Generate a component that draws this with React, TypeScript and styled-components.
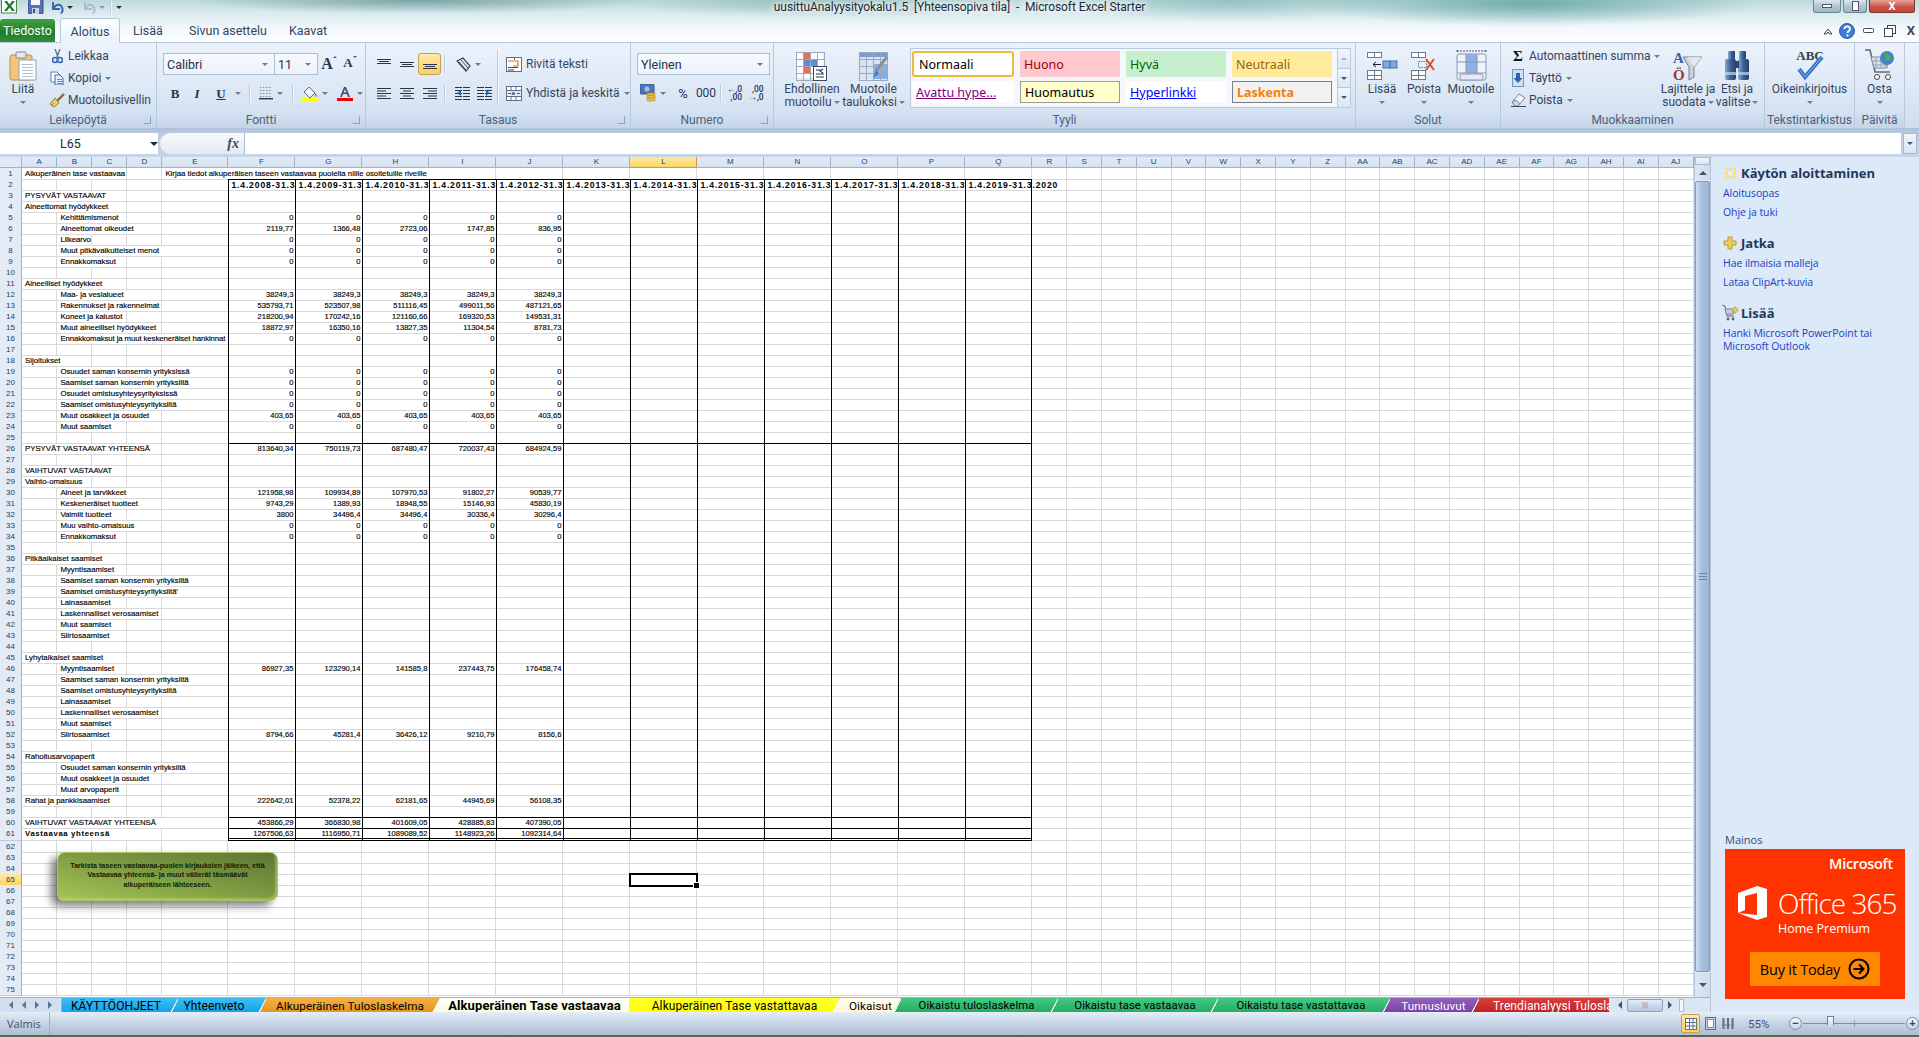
import React from 'react';
import styled, { createGlobalStyle } from 'styled-components';

const UI = '"Roboto", "Noto Sans", sans-serif';
const SEG = '"Open Sans", "Noto Sans", sans-serif';
const CELL = '"Liberation Sans", Arial, sans-serif';

const Global = createGlobalStyle`
  html, body { margin: 0; padding: 0; height: 100%; overflow: hidden; background: #dce9f9; }
  #root { height: 100%; }
  * { box-sizing: border-box; }
`;

const Win = styled.div`
  width: 1919px; height: 1037px; display: flex; flex-direction: column; overflow: hidden;
  font-family: ${UI}; font-size: 12px; color: #33465f;
`;

/* ---------- window chrome ---------- */
const Chrome = styled.div`
  height: 43px; flex: none; display: flex; flex-direction: column;
  background:
    radial-gradient(ellipse 230px 22px at 1530px 4px, rgba(98,165,160,.85), rgba(98,165,160,0)),
    radial-gradient(ellipse 170px 20px at 1230px 2px, rgba(120,180,175,.6), rgba(120,180,175,0)),
    radial-gradient(ellipse 230px 14px at 420px 0px, rgba(70,120,120,.55), rgba(70,120,120,0)),
    radial-gradient(ellipse 200px 16px at 820px 2px, rgba(110,165,160,.55), rgba(110,165,160,0)),
    linear-gradient(#bcd9dc 0, #d8e9ee 12px, #f2f8fb 28px, #fdfeff 42px);
`;
const TitleRow = styled.div`
  height: 18px; display: grid; grid-template-columns: 1fr auto 1fr; align-items: start;
`;
const Qat = styled.div`display: flex; align-items: flex-start; height: 16px;`;
const QatSlot = styled.span<{ $w: number }>`
  width: ${p => p.$w}px; height: 14px; display: flex; align-items: center; justify-content: center; flex: none;
`;
const TitleText = styled.div`
  font-family: ${UI}; font-size: 12px; letter-spacing: -.08px; color: #1c2836; white-space: pre; line-height: 14px;
  text-shadow: 0 0 6px #fff, 0 0 6px #fff, 0 0 10px #fff;
`;
const WinBtns = styled.div`display: flex; justify-content: flex-end; padding-right: 4px; gap: 2px; height: 13px;`;
const WinBtn = styled.div<{ $w: number; $close?: boolean }>`
  width: ${p => p.$w}px; height: 13px; display: flex; align-items: center; justify-content: center;
  border: 1px solid ${p => (p.$close ? '#7a3a30' : '#6d8591')}; border-top: 0;
  border-radius: 0 0 3px 3px;
  background: ${p => (p.$close ? 'linear-gradient(#e9a294, #c9564a 55%, #c24435)' : 'linear-gradient(#dbe7ec, #afc4cf 55%, #a0b6c3)')};
`;
const TabsRow = styled.div`
  flex: 1; display: flex; align-items: flex-end; border-bottom: 1px solid #b7c7da; position: relative;
`;
const FileTab = styled.div`
  width: 55px; height: 23px; background: linear-gradient(#40a040, #1f7d2c 60%, #2f9038); color: #fff;
  display: flex; align-items: center; justify-content: center; font-size: 12.5px; border-radius: 3px 3px 0 0;
`;
const MenuTab = styled.div<{ $w: number; $on?: boolean; $ml?: number }>`
  width: ${p => p.$w}px; margin-left: ${p => p.$ml || 0}px; height: ${p => (p.$on ? 25 : 23)}px; flex: none; white-space: nowrap;
  margin-bottom: ${p => (p.$on ? -1 : 0)}px;
  display: flex; align-items: center; justify-content: center; font-size: 12.5px; color: #33465f;
  ${p => p.$on ? 'background: linear-gradient(#fdfeff, #eaf1fa); border: 1px solid #b7c7da; border-bottom: 0; border-radius: 3px 3px 0 0;' : ''}
`;
const RightIcons = styled.div`
  margin-left: auto; height: 23px; display: flex; align-items: center; padding-right: 2px;
`;

/* ---------- ribbon ---------- */
const Ribbon = styled.div`
  height: 85px; flex: none; display: flex; background: linear-gradient(#ebf2fb, #dce7f5 60%, #cfddee);
`;
const Group = styled.div<{ $w: number; $noLine?: boolean }>`
  width: ${p => p.$w}px; flex: none; display: flex; flex-direction: column;
  border-right: ${p => (p.$noLine ? '0' : '1px solid #b9c9dc')};
`;
const GroupBody = styled.div<{ $pl?: number; $col?: boolean }>`
  height: 69px; flex: none; display: flex; padding-left: ${p => p.$pl || 0}px;
  ${p => p.$col ? 'flex-direction: column;' : ''}
`;
const GroupFoot = styled.div<{ $tight?: boolean }>`
  flex: 1; display: grid; grid-template-columns: ${p => (p.$tight ? '0 1fr 0' : '14px 1fr 14px')}; align-items: center;
  background: linear-gradient(rgba(190,208,230,0), rgba(190,208,230,.6));
`;
const GroupLabel = styled.div`
  grid-column: 2; text-align: center; font-size: 12px; color: #4d617c; white-space: nowrap; line-height: 15px;
`;
const Launcher = styled.div`
  grid-column: 3; width: 8px; height: 8px; border: 1px solid #8ea2ba; border-top-color: transparent; border-left-color: transparent; margin-left: 1px;
`;
const Large = styled.div<{ $w: number; $ml?: number }>`
  width: ${p => p.$w}px; margin-left: ${p => p.$ml || 0}px; flex: none; display: flex; flex-direction: column; align-items: center;
  padding-top: 5px; text-align: center;
`;
const LargeIcon = styled.div`height: 35px; flex: none; display: flex; align-items: center; justify-content: center;`;
const LargeText = styled.div`font-size: 12px; line-height: 13px; color: #33465f; white-space: nowrap; display: flex; align-items: center; gap: 2px;`;
const Caret = styled.span`
  display: inline-block; width: 0; height: 0; flex: none; border-left: 3px solid transparent; border-right: 3px solid transparent; border-top: 3px solid #6b7d94;
`;
const CaretRow = styled.div`height: 13px; display: flex; align-items: center;`;
const SmallList = styled.div<{ $ml?: number; $w?: number }>`
  display: flex; flex-direction: column; padding-top: 2px; margin-left: ${p => p.$ml || 0}px; ${p => p.$w ? `width: ${p.$w}px; flex: none;` : ''}
`;
const SmallItem = styled.div`
  height: 22px; display: flex; align-items: center; gap: 4px; color: #33465f; font-size: 12px; letter-spacing: -.05px; white-space: nowrap;
`;
const SmallIcon = styled.span`width: 14px; height: 16px; flex: none; display: flex; align-items: center; justify-content: center;`;
const ToolRow = styled.div<{ $mt?: number }>`
  height: 22px; display: flex; align-items: center; margin-top: ${p => p.$mt || 0}px; flex: none;
`;
const Combo = styled.div<{ $w: number }>`
  width: ${p => p.$w}px; height: 22px; flex: none; display: flex; align-items: center; justify-content: space-between;
  padding: 0 6px 0 3px; background: linear-gradient(#f6f9fd, #edf3fb); border: 1px solid #abbdd3; font-size: 12.5px; color: #22334a;
  & + & { margin-left: -1px; }
`;
const Tool = styled.div<{ $w: number; $ml?: number; $on?: boolean }>`
  width: ${p => p.$w}px; height: 22px; margin-left: ${p => p.$ml || 0}px; flex: none; display: flex; align-items: center; justify-content: center; gap: 4px; color: #2a3a50;
  ${p => p.$on ? 'background: linear-gradient(#ffe9a5, #fbcf63); border: 1px solid #c2a156; border-radius: 3px;' : ''}
`;
const GrowTool = styled(Tool)`gap: 0; align-items: flex-start; padding-top: 3px;`;
const Glyph = styled.span<{ $b?: boolean; $i?: boolean; $u?: boolean; $s?: number; $c?: string; $serif?: boolean }>`
  font-family: ${p => (p.$serif ? '"Liberation Serif", serif' : UI)};
  font-weight: ${p => (p.$b ? 700 : 400)}; font-style: ${p => (p.$i ? 'italic' : 'normal')};
  text-decoration: ${p => (p.$u ? 'underline' : 'none')}; font-size: ${p => p.$s || 13}px; color: ${p => p.$c || '#27374d'}; line-height: 1;
`;
const VSep = styled.div<{ $ml?: number; $h?: number; $mt?: number }>`
  width: 1px; height: ${p => p.$h || 18}px; background: #bccbdd; margin-left: ${p => p.$ml || 0}px; margin-top: ${p => p.$mt || 0}px; flex: none; box-shadow: 1px 0 0 #f3f7fc;
`;
const Column = styled.div<{ $w?: number; $ml?: number }>`
  display: flex; flex-direction: column; padding-top: 10px; margin-left: ${p => p.$ml || 0}px;
  ${p => p.$w ? `width: ${p.$w}px; flex: none;` : ''}
`;
const Gallery = styled.div`
  width: 427px; height: 60px; margin: 5px 0 0 5px; flex: none; padding: 2px 0 0 1px;
  background: #f4f8fd; border: 1px solid #b9c9dc; border-right: 0;
  display: grid; grid-template-columns: 102px 100px 100px 100px; grid-template-rows: 26px 22px; column-gap: 6px; row-gap: 4px; align-items: stretch;
`;
const Style = styled.div<{ $bg?: string; $c?: string; $bd?: string; $u?: boolean; $b?: boolean }>`
  background: ${p => p.$bg || '#fff'}; color: ${p => p.$c || '#000'};
  border: ${p => (p.$bd ? `1px solid ${p.$bd}` : '0')}; display: flex; align-items: center; padding-left: 4px;
  font-family: "Noto Sans", "Open Sans", sans-serif; font-size: 12.5px; font-weight: ${p => (p.$b ? 700 : 400)};
  text-decoration: ${p => (p.$u ? 'underline' : 'none')}; white-space: nowrap; overflow: hidden;
`;
const StyleOn = styled(Style)`border: 2px solid #f0b93c; border-radius: 3px; padding-left: 5px;`;
const GalleryScroll = styled.div`width: 14px; height: 60px; margin-top: 5px; flex: none; display: flex; flex-direction: column;`;
const GalleryBtn = styled.div`
  flex: 1; display: flex; align-items: center; justify-content: center; border: 1px solid #b9c9dc;
  background: linear-gradient(#f1f6fc, #dbe6f4); & + & { margin-top: -1px; }
`;
const Sub = styled.span`font-size: 8.5px; line-height: 8px; font-weight: 500; color: #27374d;`;
const SmallLabelBase = styled.span`font-size: 12px; color: #33465f; margin-left: 4px; white-space: nowrap;`;
const DecWrap = styled.span`display: flex; flex-direction: column; align-items: flex-end;`;
const Spacer = styled.span<{ $w: number }>`width: ${p => p.$w}px; flex: none;`;

/* ---------- formula bar ---------- */
const FormulaWrap = styled.div`
  height: 29px; flex: none; padding: 5px 2px 3px 0; display: flex; background: linear-gradient(#afc1d8, #bccde3 25%, #c6d5e8);
`;
const NameBox = styled.div`
  width: 158px; flex: none; background: #fff; display: flex; align-items: center; padding-left: 60px; font-size: 12.5px; color: #1c2836;
`;
const NameCaret = styled.span`
  margin-left: 69px; width: 0; height: 0; border-left: 4px solid transparent; border-right: 4px solid transparent; border-top: 4px solid #1c2836;
`;
const FxBox = styled.div`
  width: 85px; flex: none; display: flex; align-items: center; justify-content: flex-end; padding-right: 5px;
  background: linear-gradient(#f8fafd, #e3eaf4); border-radius: 12px 0 0 12px; border-right: 1px solid #aabbd0; margin-left: 2px;
`;
const Fx = styled.span`font-family: "Liberation Serif", serif; font-style: italic; font-weight: 700; font-size: 14px; color: #3b4a5c;`;
const FormulaInput = styled.div`flex: 1; background: #fff;`;
const FormulaDrop = styled.div`
  width: 14px; flex: none; margin-left: 2px; background: linear-gradient(#f2f6fb, #d9e4f1); border: 1px solid #a9bbd0;
  display: flex; align-items: center; justify-content: center;
`;

/* ---------- sheet ---------- */
const COLS = [35.4, 35, 35, 35, 66, ...Array(12).fill(67), ...Array(19).fill(34.8)] as number[];
const NAMES = 'A B C D E F G H I J K L M N O P Q R S T U V W X Y Z AA AB AC AD AE AF AG AH AI AJ'.split(' ');
const TEMPLATE = `22px ${COLS.map(c => c + 'px').join(' ')}`;

const Body = styled.div`flex: 1; display: flex; min-height: 0;`;
const Left = styled.div`width: 1710px; flex: none; display: flex; flex-direction: column;`;
const SheetRow = styled.div`flex: 1; display: flex; min-height: 0;`;
const Sheet = styled.div`width: 1694px; flex: none; position: relative; background: #fff; overflow: hidden;`;
const HeadRow = styled.div`display: grid; grid-template-columns: ${TEMPLATE}; height: 11px;`;
const Corner = styled.div`background: #dfe8f4; border-right: 1px solid #9eb3cb; border-bottom: 1px solid #9eb3cb;`;
const ColHead = styled.div<{ $sel?: boolean }>`
  background: ${p => (p.$sel ? 'linear-gradient(#fde9a5, #fbd565)' : 'linear-gradient(#e2ebf6, #d6e2f1)')};
  border-right: 1px solid ${p => (p.$sel ? '#d19a3b' : '#9eb3cb')}; border-bottom: 1px solid ${p => (p.$sel ? '#d19a3b' : '#9eb3cb')};
  font: 8px/10px ${CELL}; text-align: center; color: #27406a;
`;
const Row = styled.div<{ $h: number }>`display: grid; grid-template-columns: ${TEMPLATE}; height: ${p => p.$h}px;`;
const RowHead = styled.div<{ $sel?: boolean }>`
  background: ${p => (p.$sel ? 'linear-gradient(#fde9a5, #fbd565)' : '#e2ebf6')};
  border-right: 1px solid ${p => (p.$sel ? '#d19a3b' : '#9eb3cb')}; border-bottom: 1px solid ${p => (p.$sel ? '#d19a3b' : '#bccbdc')};
  font: 8px/10px ${CELL}; text-align: center; color: #27406a; padding-top: 1px;
`;
const Cell = styled.div<{
  $span?: number; $num?: boolean; $bl?: boolean; $br?: boolean; $top?: boolean; $dbl?: boolean; $noR?: boolean;
  $bold?: boolean; $over?: boolean; $sel?: boolean; $big?: boolean; $wide?: boolean; $fit?: boolean;
}>`
  grid-column: span ${p => p.$span || 1};
  min-width: 0; white-space: nowrap; color: #000; position: relative;
  font-family: ${CELL}; font-size: ${p => (p.$big ? 8.6 : p.$num ? 7.6 : 7.8)}px; line-height: 10px; font-weight: ${p => (p.$bold ? 700 : 400)};
  -webkit-text-stroke: ${p => (p.$bold ? '0' : '.14px #000')};
  letter-spacing: ${p => (p.$big ? '.85px' : p.$wide ? '.62px' : p.$fit ? '-.1px' : '0')};
  text-align: ${p => (p.$num ? 'right' : 'left')}; padding: ${p => (p.$top ? 0 : 1)}px ${p => (p.$num ? 2 : 0)}px 0 ${p => (p.$big ? 2 : 3)}px;
  overflow: ${p => (p.$over ? 'visible' : 'hidden')};
  border-right: ${p => (p.$br ? '1px solid #000' : p.$noR ? '0' : '1px solid #d9d9d9')};
  border-bottom: ${p => (p.$dbl ? '3px double #000' : '1px solid #d9d9d9')};
  ${p => (p.$bl ? 'border-left: 1px solid #000;' : '')}
  ${p => (p.$top ? 'border-top: 1px solid #000;' : '')}
  ${p => p.$sel ? `
    outline: 2px solid #000; outline-offset: -1px; z-index: 2; overflow: visible;
    &::after { content: ''; position: absolute; right: -4px; bottom: -4px; width: 5px; height: 5px; background: #000; border: 1px solid #fff; }
  ` : ''}
`;
const Note = styled.div`
  position: absolute; left: 57px; top: 695px; width: 221px; height: 49px; border-radius: 8px;
  border: 1px solid #a9c761; display: flex; align-items: center; justify-content: center; text-align: center;
  background: linear-gradient(to top right, #a6c556, #7f9c43 50%, #5c7633);
  box-shadow: -6px 5px 9px rgba(0,0,0,.5), inset -2px -2px 2px rgba(200,225,130,.45);
  font: 700 7.1px/9.6px ${CELL}; color: #101f04; padding-bottom: 1px;
`;
const VScroll = styled.div`width: 16px; flex: none; display: flex; flex-direction: column; background: #e6edf6; border-left: 1px solid #b5c5d8;`;
const Split = styled.div`height: 8px; flex: none; background: linear-gradient(#f5f8fc, #d9e4f1); border: 1px solid #a9bbd0;`;
const ScrollArrow = styled.div<{ $h: number }>`
  height: ${p => p.$h}px; flex: none; display: flex; align-items: center; justify-content: center; background: linear-gradient(90deg, #dde7f3, #cfdcec);
`;
const Thumb = styled.div`
  flex: 1; margin: 1px 0; display: flex; align-items: center; justify-content: center; border: 1px solid #7f99b9; border-radius: 2px;
  background: linear-gradient(90deg, #cfdff1, #a7c0de 45%, #9cb6d6);
`;
const Grip = styled.span`width: 8px; height: 7px; border-top: 1px solid #6a86a8; border-bottom: 1px solid #6a86a8; position: relative;
  &::after { content: ''; position: absolute; left: 0; right: 0; top: 2px; height: 1px; background: #6a86a8; }`;
const Tri = styled.span<{ $d: 'u' | 'd' | 'l' | 'r'; $s?: number; $c?: string }>`
  display: inline-block; width: 0; height: 0; flex: none;
  ${p => {
    const s = p.$s || 4; const c = p.$c || '#40566f';
    if (p.$d === 'u') return `border-left:${s}px solid transparent;border-right:${s}px solid transparent;border-bottom:${s}px solid ${c};`;
    if (p.$d === 'd') return `border-left:${s}px solid transparent;border-right:${s}px solid transparent;border-top:${s}px solid ${c};`;
    if (p.$d === 'l') return `border-top:${s}px solid transparent;border-bottom:${s}px solid transparent;border-right:${s}px solid ${c};`;
    return `border-top:${s}px solid transparent;border-bottom:${s}px solid transparent;border-left:${s}px solid ${c};`;
  }}
`;

/* tabs */
const TabBar = styled.div`
  height: 15px; flex: none; display: flex; background: #d3dfee; border-top: 1px solid #9fb3cb;
`;
const TabNav = styled.div`width: 62px; flex: none; display: flex; align-items: center; justify-content: space-around; padding: 0 4px; border-right: 1px solid #9fb3cb;`;
const TabList = styled.div`width: 1547px; flex: none; display: flex; overflow: hidden;`;
const Tab = styled.div<{ $w: number; $bg: string; $c?: string; $on?: boolean; $first?: boolean; $z: number; $fs: number; $pr: number }>`
  width: ${p => p.$w}px; margin-left: ${p => (p.$first ? 0 : -8)}px; flex: none; position: relative; z-index: ${p => p.$z};
  height: 15px; padding: 0 ${p => p.$pr}px 0 ${p => (p.$first ? 0 : 8)}px; display: flex; align-items: center; justify-content: center; overflow: hidden;
  background: ${p => p.$bg}; color: ${p => p.$c || '#000'}; white-space: nowrap;
  font-family: ${UI}; font-size: ${p => p.$fs}px; font-weight: ${p => (p.$on ? 700 : 400)}; letter-spacing: .1px;
  clip-path: ${p => (p.$first ? 'none' : 'polygon(8px 0, 100% 0, 100% 100%, 0 100%)')};
  ${p => p.$first ? '' : `&::before { content: ''; position: absolute; left: 0; top: 0; width: 8px; height: 100%;
    background: linear-gradient(to bottom right, transparent calc(50% - 1.2px), #f5f9fd calc(50% - 1.2px), #f5f9fd calc(50% + 1.2px), transparent calc(50% + 1.2px)); }`}
`;
const TabClipStart = styled.span`align-self: stretch; display: flex; align-items: center; justify-content: flex-start; width: 100%; overflow: hidden; padding-left: 14px;`;
const HScroll = styled.div`flex: 1; display: flex; align-items: center; padding-left: 9px; gap: 5px; background: #dbe6f3;`;
const HThumb = styled.div`width: 36px; height: 13px; border: 1px solid #8aa3c0; border-radius: 2px; background: linear-gradient(#e4edf7, #b3c8e0); display: flex; align-items: center; justify-content: center; color: #6a86a8; font-size: 8px; line-height: 8px;`;
const Splitter = styled.div`width: 5px; height: 13px; margin-left: 2px; border: 1px solid #a9bbd0; background: #f5f8fc;`;

/* panel */
const Panel = styled.div`
  flex: 1; background: #dce9f9; border-left: 1px solid #b5c5d8; display: flex; flex-direction: column; padding-left: 12px; font-family: ${SEG};
`;
const PanelHead = styled.div<{ $mt: number }>`
  display: flex; align-items: center; margin-top: ${p => p.$mt}px; margin-left: -2px; height: 18px;
  font-size: 13px; font-weight: 700; color: #20385c; gap: 2px; white-space: nowrap;
`;
const HeadIcon = styled.span`width: 18px; display: flex; justify-content: center; flex: none;`;
const PanelLink = styled.div<{ $mt: number }>`
  margin-top: ${p => p.$mt}px; font-size: 10.5px; line-height: 13px; color: #1a3fc4; white-space: nowrap; letter-spacing: -.08px;
`;
const AdLabel = styled.div`margin: auto 0 2px 2px; font-size: 11px; line-height: 14px; color: #3a4c6d;`;
const Ad = styled.div`
  width: 180px; height: 150px; margin: 0 0 13px 2px; background: #ff3300; color: #fff; display: flex; flex-direction: column; flex: none; font-family: ${SEG};
`;
const AdMs = styled.div`align-self: flex-end; padding: 6px 12px 0 0; font-size: 14.5px; font-weight: 600; line-height: 17px; letter-spacing: -.3px;`;
const AdMain = styled.div`display: flex; margin: 13px 0 0 13px; align-items: flex-start; gap: 10px;`;
const AdText = styled.div`display: flex; flex-direction: column;`;
const AdTitle = styled.div`font-size: 28px; font-weight: 300; line-height: 32px; letter-spacing: -1px; white-space: nowrap; margin-top: 2px;`;
const AdSub = styled.div`font-size: 12.5px; line-height: 16px; margin-top: 2px; white-space: nowrap;`;
const AdBtn = styled.div`
  width: 130px; height: 34px; margin: auto 0 13px 25px; flex: none; background: #ff8800; color: #000; display: flex; align-items: center; justify-content: center; gap: 8px;
  font-size: 14.5px; font-weight: 500; letter-spacing: -.2px;
`;

/* status */
const Status = styled.div`
  height: 23px; flex: none; display: flex; align-items: center; background: linear-gradient(#e5edf8, #c9d6e7 45%, #aebdd3);
  font-size: 11.5px; color: #3e5270;
`;
const StatusText = styled.div`width: 50px; padding-left: 7px; border-right: 1px solid #9fb0c7; height: 100%; display: flex; align-items: center; font-family: ${SEG}; font-size: 11px;`;
const ViewBtn = styled.div<{ $on?: boolean; $ml?: number }>`
  width: ${p => (p.$on ? 19 : 15)}px; height: 19px; margin-left: ${p => p.$ml || 0}px; display: flex; align-items: center; justify-content: center; flex: none;
  ${p => p.$on ? 'background: linear-gradient(#ffe9a5, #fbcf63); border: 1px solid #c2a156; border-radius: 2px;' : ''}
`;
const ZoomPct = styled.div`margin-left: 13px; width: 30px; font-size: 11.5px;`;
const ZoomRound = styled.div<{ $ml?: number }>`
  width: 13px; height: 13px; border-radius: 50%; border: 1px solid #7a8ea9; background: linear-gradient(#f5f8fc, #c7d4e5); margin-left: ${p => p.$ml || 0}px;
  flex: none; display: flex; align-items: center; justify-content: center; font: 700 11px/11px ${CELL}; color: #33465f;
`;
const ZoomTrack = styled.div`
  width: 102px; height: 1px; background: #7a8ea9; position: relative; margin: 0 1px; flex: none;
`;
const ZoomTick = styled.span`position: absolute; left: 51px; top: -3px; width: 1px; height: 7px; background: #8a9cb4;`;
const ZoomThumb = styled.span`
  position: absolute; left: 24px; top: -7px; width: 7px; height: 13px; background: linear-gradient(#f5f8fc, #c7d4e5); border: 1px solid #6d819c;
  clip-path: polygon(0 0, 100% 0, 100% 65%, 50% 100%, 0 65%);
`;
const BottomEdge = styled.div`height: 2px; flex: none; background: #55684f;`;

/* ---------- icons ---------- */
const Svg: React.FC<React.PropsWithChildren<{ w: number; h: number; vb?: string }>> = ({ w, h, vb, children }) => (
  <svg width={w} height={h} viewBox={vb || `0 0 ${w} ${h}`} style={{ display: 'block', flex: 'none' }}>{children}</svg>
);
const Bars = ({ items, w = 14, h = 12 }: { items: [number, number, number][]; w?: number; h?: number }) => (
  <Svg w={w} h={h}>{items.map(([x, y, l], i) => <rect key={i} x={x} y={y} width={l} height={1} fill="#2b3443" />)}</Svg>
);
const PasteIcon = () => (
  <Svg w={28} h={30}>
    <rect x="1" y="4" width="22" height="25" rx="2" fill="#f3c77a" stroke="#b5904f" />
    <rect x="7" y="1" width="10" height="6" rx="1" fill="#e8e8e8" stroke="#7d8794" />
    <path d="M10 9h17v20H10z" fill="#fff" stroke="#8fa0b5" />
    {[13, 16, 19, 22, 25].map(y => <rect key={y} x="13" y={y} width="11" height="1" fill="#b5c0cd" />)}
  </Svg>
);
const CutIcon = () => (
  <Svg w={11} h={15}>
    <path d="M3 0l3 8M8 0L5 8" stroke="#5a6e88" strokeWidth="1.3" fill="none" />
    <circle cx="3" cy="11" r="2.5" fill="none" stroke="#3d66ad" strokeWidth="1.6" />
    <circle cx="8" cy="11" r="2.5" fill="none" stroke="#3d66ad" strokeWidth="1.6" />
  </Svg>
);
const CopyIcon = () => (
  <Svg w={14} h={14}>
    <path d="M1 1h6l2 2v8H1z" fill="#fff" stroke="#5c7fb8" />
    <path d="M5 4h5l3 3v7H5z" fill="#eaf2fb" stroke="#3e64a3" />
    {[8, 10, 12].map(y => <rect key={y} x="7" y={y} width="5" height="1" fill="#6d8cbc" />)}
  </Svg>
);
const BrushIcon = () => (
  <Svg w={16} h={15}>
    <path d="M8 8l7-7" stroke="#8a6b2e" strokeWidth="2.4" />
    <path d="M1 11l5-6 4 5-5 4z" fill="#f0cf6b" stroke="#97792f" />
    <path d="M2 13l3-3" stroke="#97792f" />
  </Svg>
);
const BorderIcon = () => (
  <Svg w={14} h={14}>
    {[1, 4, 7, 10].map(x => [1, 4, 7, 10].map(y => <rect key={`${x}${y}`} x={x} y={y} width="1.5" height="1" fill="#7f8b99" />))}
    <rect x="0" y="12" width="14" height="1.4" fill="#2b3443" />
  </Svg>
);
const FillIcon = () => (
  <Svg w={16} h={15}>
    <path d="M7 1l6 6-5 5-6-6z" fill="#eef3f9" stroke="#5a6a7e" />
    <path d="M13 7c1.5 1.5 2 3 1 4-1-1-1-3-1-4z" fill="#3a5f9d" />
    <rect x="0" y="12" width="15" height="3" fill="#ffff00" />
  </Svg>
);
const FontColor = () => (
  <Svg w={16} h={15}>
    <path d="M3 11L7 1h2l4 10h-2l-1-3H6l-1 3zM6.6 6.5h2.8L8 3z" fill="#3a4f78" />
    <rect x="0" y="12" width="16" height="3" fill="#f40000" />
  </Svg>
);
const OrientIcon = () => (
  <Svg w={15} h={15}>
    <path d="M1 4l6-3 7 8-4 5z" fill="none" stroke="#3a4350" strokeWidth="1.2" />
    <path d="M3 5l7 8M5 3l7 8" stroke="#3a4350" />
  </Svg>
);
const IndentIcon = ({ rev }: { rev?: boolean }) => (
  <Svg w={15} h={14}>
    {[1, 4, 7, 10, 13].map(y => <rect key={y} x={0} y={y} width="15" height="1" fill="#2b3443" />)}
    <rect x="7" y="0" width="1" height="14" fill="#dce7f5" />
    <path d={rev ? 'M9 4l4 3-4 3z' : 'M6 4L2 7l4 3z'} fill="#2f62b5" />
  </Svg>
);
const WrapIcon = () => (
  <Svg w={16} h={15}>
    <rect x="0.5" y="0.5" width="15" height="14" fill="#fff" stroke="#5f6f84" />
    <path d="M2 4h10v5H7" fill="none" stroke="#d5782a" strokeWidth="1.2" />
    <rect x="2" y="10" width="10" height="1" fill="#39465a" />
    <rect x="2" y="12.5" width="6" height="1" fill="#39465a" />
    <rect x="8" y="0" width="1" height="3" fill="#5f6f84" />
  </Svg>
);
const MergeIcon = () => (
  <Svg w={16} h={15}>
    <rect x="0.5" y="0.5" width="15" height="14" fill="#fff" stroke="#5f6f84" />
    <rect x="1" y="5" width="14" height="5" fill="#e3ecf8" />
    <path d="M1 4.5h14M1 10.5h14M5 1v3M10 1v3M5 11v3M10 11v3" stroke="#5f6f84" />
    <path d="M2 7.5h3M14 7.5h-3" stroke="#2f62b5" />
    <text x="5.6" y="9.4" fontSize="6" fontFamily={CELL} fill="#000">a</text>
  </Svg>
);
const CurrencyIcon = () => (
  <Svg w={16} h={18}>
    <rect x="0" y="0" width="14" height="10" rx="1" fill="#4d76b8" stroke="#35588f" />
    <circle cx="7" cy="5" r="2.5" fill="#a8c1e4" />
    {[9, 11.5, 14].map(y => <ellipse key={y} cx="11" cy={y + 1.5} rx="4.5" ry="1.6" fill="#f0c24a" stroke="#b3852a" strokeWidth=".7" />)}
  </Svg>
);
const GridBase = ({ x, y, c, r, s = 7, color = '#9aaabc' }: { x: number; y: number; c: number; r: number; s?: number; color?: string }) => (
  <g fill="none" stroke={color}>
    {Array.from({ length: c }).map((_, i) => Array.from({ length: r }).map((_, j) => (
      <rect key={`${i}-${j}`} x={x + i * s + .5} y={y + j * s + .5} width={s} height={s} />
    )))}
  </g>
);
const CFIcon = () => (
  <Svg w={32} h={30}>
    <rect x="0" y="1" width="27" height="26" fill="#fff" />
    <rect x="7" y="1" width="7" height="7" fill="#ef6a50" />
    <rect x="7" y="8" width="14" height="7" fill="#5b8dd9" />
    <rect x="7" y="15" width="7" height="7" fill="#ef6a50" />
    <GridBase x={0} y={1} c={4} r={4} />
    <rect x="17.5" y="15.5" width="13" height="14" fill="#fff" stroke="#3c4a5e" />
    <path d="M20 19h4M27 18l-3 2 3 2M20 23h8M20 26h8" stroke="#243246" strokeWidth="1.1" fill="none" />
  </Svg>
);
const TableIcon = () => (
  <Svg w={31} h={30}>
    <rect x="1" y="1" width="28" height="5" fill="#7c9ad0" />
    <rect x="1" y="6" width="28" height="22" fill="#d8e4f6" />
    <rect x="15" y="13" width="14" height="15" fill="#8aaee3" />
    <GridBase x={1} y={1} c={4} r={4} s={7} />
    <path d="M29 6L18 20" stroke="#8a8f98" strokeWidth="3" />
    <path d="M18 19l-3 8 6-4z" fill="#4b78c7" />
  </Svg>
);
const InsertIcon = () => (
  <Svg w={31} h={28}>
    <g fill="#fff" stroke="#6b7a8f">
      <rect x="0.5" y="0.5" width="7" height="5" /><rect x="7.5" y="0.5" width="7" height="5" />
      <rect x="0.5" y="18.5" width="7" height="5" /><rect x="7.5" y="18.5" width="7" height="5" />
      <rect x="0.5" y="23.5" width="7" height="4" /><rect x="7.5" y="23.5" width="7" height="4" />
    </g>
    <rect x="16" y="9" width="7" height="7" fill="#7da7e2" stroke="#4c6fa5" />
    <rect x="23" y="9" width="7" height="7" fill="#7da7e2" stroke="#4c6fa5" />
    <path d="M14 12.5H6M9 10l-3 2.5L9 15" fill="none" stroke="#222" />
  </Svg>
);
const DeleteIcon = () => (
  <Svg w={26} h={28}>
    <g fill="#fff" stroke="#6b7a8f">
      <rect x="0.5" y="0.5" width="7" height="5" /><rect x="7.5" y="0.5" width="7" height="5" />
      <rect x="0.5" y="18.5" width="7" height="5" /><rect x="7.5" y="18.5" width="7" height="5" />
      <rect x="0.5" y="23.5" width="7" height="4" /><rect x="7.5" y="23.5" width="7" height="4" />
    </g>
    <rect x="7.5" y="9.5" width="8" height="6" fill="none" stroke="#6b7a8f" strokeDasharray="1.5 1" />
    <path d="M15 7l8 11M23 7l-8 11" stroke="#e3472b" strokeWidth="2" />
  </Svg>
);
const FormatIcon = () => (
  <Svg w={31} h={31}>
    <path d="M1 1h29M1 0v2M30 0v2" stroke="#4a5a6e" strokeDasharray="2 1" />
    <rect x="1" y="4" width="29" height="26" rx="2" fill="#eef3fa" stroke="#8a99ac" />
    <rect x="10" y="4" width="11" height="19" fill="#8db0e6" />
    <path d="M10 4v26M21 4v26M1 12h29M1 23h29" stroke="#8a99ac" fill="none" />
    <rect x="4" y="24" width="23" height="6" rx="2" fill="#e3ebf5" stroke="#8a99ac" />
  </Svg>
);
const SigmaGlyph = () => <Glyph $s={15} $b $serif $c="#111">Σ</Glyph>;
const FillDown = () => (
  <Svg w={12} h={18}>
    <rect x="0.5" y="0.5" width="11" height="17" fill="#cfdff3" stroke="#7a92b2" />
    <path d="M4 4h4v5h2.5L6 14 1.5 9H4z" fill="#2f62b5" />
  </Svg>
);
const Eraser = () => (
  <Svg w={15} h={14}>
    <path d="M1 9l7-8 6 4-7 8H4z" fill="#f4f6f9" stroke="#7a8797" />
    <path d="M1 9l3 4h3l2-2-4-4z" fill="#cfd6df" stroke="#7a8797" />
    <rect x="0" y="13" width="15" height="1" fill="#3c4a5e" />
  </Svg>
);
const SortIcon = () => (
  <Svg w={30} h={32}>
    <path d="M10 7h19l-8 10v10l-5 3V17z" fill="#cfd3d9" stroke="#7a7f87" />
    <path d="M14 7h15l-8 10z" fill="#e9ecef" opacity=".8" />
    <text x="0" y="13" fontFamily={'"Liberation Serif", serif'} fontWeight="700" fontSize="15" fill="#3a62a8">A</text>
    <text x="0" y="30" fontFamily={'"Liberation Serif", serif'} fontWeight="700" fontSize="15" fill="#963a3a">Ö</text>
  </Svg>
);
const BinoIcon = () => (
  <Svg w={28} h={31}>
    <defs>
      <linearGradient id="bn" x1="0" x2="1"><stop offset="0" stopColor="#8ba8d6" /><stop offset=".5" stopColor="#3e6099" /><stop offset="1" stopColor="#24406f" /></linearGradient>
    </defs>
    <rect x="5" y="1" width="7" height="8" rx="1" fill="url(#bn)" /><rect x="16" y="1" width="7" height="8" rx="1" fill="url(#bn)" />
    <rect x="2" y="9" width="11" height="21" rx="2" fill="url(#bn)" /><rect x="15" y="9" width="11" height="21" rx="2" fill="url(#bn)" />
    <rect x="12" y="11" width="4" height="7" fill="#2b4670" />
    <rect x="2" y="22" width="11" height="3" fill="#c9d8ee" opacity=".7" /><rect x="15" y="22" width="11" height="3" fill="#c9d8ee" opacity=".7" />
  </Svg>
);
const AbcIcon = () => (
  <Svg w={32} h={34}>
    <text x="16" y="11" textAnchor="middle" fontFamily={'"Liberation Serif", serif'} fontWeight="700" fontSize="13" fill="#3a3f48">ABC</text>
    <path d="M5 20l6 8L28 8" fill="none" stroke="#2e6fc4" strokeWidth="4" />
    <path d="M5 20l6 8L28 8" fill="none" stroke="#93bdf0" strokeWidth="1" />
  </Svg>
);
const CartIcon = () => (
  <Svg w={30} h={33}>
    <path d="M0 1h5l5 22h15" fill="none" stroke="#616a76" strokeWidth="1.6" />
    <path d="M6 8h18l-2 11H9z" fill="#dde2e8" stroke="#828b96" />
    <path d="M11 8v11M16 8v11M21 8l-1 11M7 12h16M8 16h15" stroke="#9aa3ad" />
    <circle cx="12" cy="28" r="2.5" fill="#fff" stroke="#444" /><circle cx="23" cy="28" r="2.5" fill="#fff" stroke="#444" />
    <circle cx="22" cy="9" r="7" fill="#3f86c8" />
    <path d="M18 5c3 1 3 4 1 6 3 1 5 1 7-2-2-3-4-5-8-4z" fill="#5ca84a" />
  </Svg>
);
const ExcelIcon = () => (
  <Svg w={16} h={14}>
    <rect x="0.5" y="-3" width="15" height="16" fill="#fff" stroke="#52834f" />
    <path d="M3 1l4 5-4 5h3l2.5-3.4L11 11h3L10 6l4-5h-3L8.5 4.5 6 1z" fill="#1c7a2e" />
  </Svg>
);
const SaveIcon = () => (
  <Svg w={16} h={14}>
    <rect x="0" y="-3" width="15" height="17" rx="1" fill="#5571b8" stroke="#3b4f87" />
    <rect x="3" y="-2" width="9" height="7" fill="#f5f7fb" />
    <rect x="4" y="8" width="7" height="6" fill="#c9d3e4" /><rect x="5" y="9" width="2" height="4" fill="#3b4f87" />
  </Svg>
);
const UndoIcon = ({ grey }: { grey?: boolean }) => (
  <Svg w={14} h={13}>
    <path d="M3 1v7h7M3.5 7.5C6 3 11 2 12.5 8c.4 2-.5 4-2 4" fill="none" stroke={grey ? '#a9bccb' : '#3c68ab'} strokeWidth="2" />
  </Svg>
);
const HelpIcon = () => (
  <Svg w={16} h={16}>
    <circle cx="8" cy="8" r="7.5" fill="#3d7dd2" stroke="#2a5ea8" />
    <path d="M5.5 6c0-3.5 5.5-3.5 5.5 0 0 2-2.5 2-2.5 4" fill="none" stroke="#fff" strokeWidth="1.8" />
    <circle cx="8.5" cy="12.3" r="1.1" fill="#fff" />
  </Svg>
);
const Spark = () => (
  <Svg w={11} h={11}>
    {[0, 4, 8].map(x => [0, 4, 8].map(y => <rect key={`${x}${y}`} x={x} y={y} width="3" height="3" fill={x === 4 && y === 4 ? '#fff6b0' : '#f5e07a'} />))}
  </Svg>
);
const PlusGold = () => (
  <Svg w={14} h={14}>
    <path d="M5 1h4v4h4v4H9v4H5V9H1V5h4z" fill="#f2cd56" stroke="#b89a3a" />
  </Svg>
);
const CartPlus = () => (
  <Svg w={17} h={16}>
    <path d="M0 0l3 1 2 10h7" fill="none" stroke="#56606c" />
    <path d="M3 4h9l-1 5H4z" fill="#c8d0d9" stroke="#747e8a" />
    <circle cx="6" cy="14" r="1.4" fill="#56606c" /><circle cx="11" cy="14" r="1.4" fill="#56606c" />
    <path d="M12 2h2v2h2v2h-2v2h-2V6h-2V4h2z" fill="#f2cd56" stroke="#b89a3a" strokeWidth=".6" />
  </Svg>
);
const OfficeLogo = () => (
  <Svg w={30} h={36}>
    <path d="M0 8L19 1l10 3v28l-10 3L0 28l19 2V8L7 11v14L0 28z" fill="#fff" />
  </Svg>
);
const ArrowCircle = () => (
  <Svg w={22} h={22}>
    <circle cx="11" cy="11" r="9.5" fill="none" stroke="#000" strokeWidth="2" />
    <path d="M5.5 11h10M11 6.5l4.5 4.5L11 15.5" fill="none" stroke="#000" strokeWidth="2" />
  </Svg>
);

/* ---------- data ---------- */
type T = { c: number; t: string; s: number; b?: boolean; f?: boolean };
type RowSpec = { cells?: T[]; v?: string[] };
const Z = ['0', '0', '0', '0', '0'];
const A = (t: string, s: number, b?: boolean): T => ({ c: 0, t, s, b });
const B = (t: string, s: number, f?: boolean): T => ({ c: 1, t, s, f });
const rowsData: Record<number, RowSpec> = {
  1: { cells: [A('Alkuperäinen tase vastaavaa', 3), { c: 4, t: 'Kirjaa tiedot alkuperäisen taseen vastaavaa puolelta niille osoitetuille riveille', s: 5 }] },
  3: { cells: [A('PYSYVÄT VASTAAVAT', 3)] },
  4: { cells: [A('Aineettomat hyödykkeet', 3)] },
  5: { cells: [B('Kehittämismenot', 2)], v: Z },
  6: { cells: [B('Aineettomat oikeudet', 3)], v: ['2119,77', '1366,48', '2723,06', '1747,85', '836,95'] },
  7: { cells: [B('Liikearvo', 1, true)], v: Z },
  8: { cells: [B('Muut pitkävaikutteiset menot', 4)], v: Z },
  9: { cells: [B('Ennakkomaksut', 2)], v: Z },
  11: { cells: [A('Aineelliset hyödykkeet', 3)] },
  12: { cells: [B('Maa- ja vesialueet', 3)], v: ['38249,3', '38249,3', '38249,3', '38249,3', '38249,3'] },
  13: { cells: [B('Rakennukset ja rakennelmat', 3)], v: ['535793,71', '523507,98', '511116,45', '499011,56', '487121,65'] },
  14: { cells: [B('Koneet ja kalustot', 2)], v: ['218200,94', '170242,16', '121160,66', '169320,53', '149531,31'] },
  15: { cells: [B('Muut aineelliset hyödykkeet', 3)], v: ['18872,97', '16350,16', '13827,35', '11304,54', '8781,73'] },
  16: { cells: [B('Ennakkomaksut ja muut keskeneräiset hankinnat', 4, true)], v: Z },
  18: { cells: [A('Sijoitukset', 2)] },
  19: { cells: [B('Osuudet saman konsernin yrityksissä', 4)], v: Z },
  20: { cells: [B('Saamiset saman konsernin yrityksiltä', 4)], v: Z },
  21: { cells: [B('Osuudet omistusyhteysyrityksissä', 4)], v: Z },
  22: { cells: [B('Saamiset omistusyhteysyrityksiltä', 4)], v: Z },
  23: { cells: [B('Muut osakkeet ja osuudet', 3)], v: ['403,65', '403,65', '403,65', '403,65', '403,65'] },
  24: { cells: [B('Muut saamiset', 2)], v: Z },
  26: { cells: [A('PYSYVÄT VASTAAVAT YHTEENSÄ', 4)], v: ['813640,34', '750119,73', '687480,47', '720037,43', '684924,59'] },
  28: { cells: [A('VAIHTUVAT VASTAAVAT', 3)] },
  29: { cells: [A('Vaihto-omaisuus', 2)] },
  30: { cells: [B('Aineet ja tarvikkeet', 3)], v: ['121958,98', '109934,89', '107970,53', '91802,27', '90539,77'] },
  31: { cells: [B('Keskeneräiset tuotteet', 3)], v: ['9743,29', '1389,93', '18948,55', '15146,93', '45830,19'] },
  32: { cells: [B('Valmiit tuotteet', 2)], v: ['3800', '34496,4', '34496,4', '30336,4', '30296,4'] },
  33: { cells: [B('Muu vaihto-omaisuus', 3)], v: Z },
  34: { cells: [B('Ennakkomaksut', 2)], v: Z },
  36: { cells: [A('Pitkäaikaiset saamiset', 3)] },
  37: { cells: [B('Myyntisaamiset', 2)] },
  38: { cells: [B('Saamiset saman konsernin yrityksiltä', 4)] },
  39: { cells: [B("Saamiset omistusyhteysyrityksiltä'", 4)] },
  40: { cells: [B('Lainasaamiset', 2)] },
  41: { cells: [B('Laskennalliset verosaamiset', 3)] },
  42: { cells: [B('Muut saamiset', 2)] },
  43: { cells: [B('Siirtosaamiset', 2)] },
  45: { cells: [A('Lyhytaikaiset saamiset', 3)] },
  46: { cells: [B('Myyntisaamiset', 2)], v: ['86927,35', '123290,14', '141585,8', '237443,75', '176458,74'] },
  47: { cells: [B('Saamiset saman konsernin yrityksiltä', 4)] },
  48: { cells: [B('Saamiset omistusyhteysyrityksiltä', 4)] },
  49: { cells: [B('Lainasaamiset', 2)] },
  50: { cells: [B('Laskennalliset verosaamiset', 3)] },
  51: { cells: [B('Muut saamiset', 2)] },
  52: { cells: [B('Siirtosaamiset', 2)], v: ['8794,66', '45281,4', '36426,12', '9210,79', '8156,6'] },
  54: { cells: [A('Rahoitusarvopaperit', 3)] },
  55: { cells: [B('Osuudet saman konsernin yrityksiltä', 4)] },
  56: { cells: [B('Muut osakkeet ja osuudet', 3)] },
  57: { cells: [B('Muut arvopaperit', 2)] },
  58: { cells: [A('Rahat ja pankkisaamiset', 3)], v: ['222642,01', '52378,22', '62181,65', '44945,69', '56108,35'] },
  60: { cells: [A('VAIHTUVAT VASTAAVAT YHTEENSÄ', 5)], v: ['453866,29', '366830,98', '401609,05', '428885,83', '407390,05'] },
  61: { cells: [A('Vastaavaa yhteensä', 4, true)], v: ['1267506,63', '1116950,71', '1089089,52', '1148923,26', '1092314,64'] },
};

const TOP_ROWS = new Set([2, 26, 60, 61]);

function SheetRowView({ n }: { n: number }) {
  const spec = rowsData[n] || {};
  const out: React.ReactNode[] = [];
  for (let i = 0; i < 36; i++) {
    const framed = n >= 2 && n <= 61 && i >= 5 && i <= 16;
    const common = {
      $bl: framed, $br: framed && i === 16, $noR: n >= 2 && n <= 61 && i >= 4 && i <= 15,
      $top: framed && TOP_ROWS.has(n), $dbl: framed && n === 61,
    };
    const t = spec.cells?.find(x => x.c === i);
    if (t) {
      out.push(<Cell key={i} $span={t.s} $bold={t.b} $wide={t.b} $fit={t.f} $noR={n >= 2 && i + t.s - 1 === 4}>{t.t}</Cell>);
      i += t.s - 1;
      continue;
    }
    if (n === 2 && framed) {
      const k = i - 5;
      out.push(<Cell key={i} {...common} $bold $big $over={i === 16}>{`1.4.${2008 + k}-31.3.${2009 + k}`}</Cell>);
      continue;
    }
    if (spec.v && i >= 5 && i <= 9) {
      out.push(<Cell key={i} {...common} $num>{spec.v[i - 5]}</Cell>);
      continue;
    }
    out.push(<Cell key={i} {...common} $sel={n === 65 && i === 11} />);
  }
  return (
    <Row $h={n === 61 ? 13 : 11}>
      <RowHead $sel={n === 65}>{n}</RowHead>
      {out}
    </Row>
  );
}

const TABS: { t: string; end: number; bg: string; c?: string; on?: boolean; clip?: boolean; fs?: number; pr?: number }[] = [
  { t: 'KÄYTTÖOHJEET', end: 178, bg: 'linear-gradient(#3fbdf2, #12a2e6)', fs: 12, pr: 8 },
  { t: 'Yhteenveto', end: 266, bg: 'linear-gradient(#3fbdf2, #12a2e6)', fs: 12, pr: 16 },
  { t: 'Alkuperäinen Tuloslaskelma', end: 440, bg: 'linear-gradient(#f5b043, #e4951c)', fs: 11.7, pr: 6 },
  { t: 'Alkuperäinen Tase vastaavaa', end: 629, bg: 'linear-gradient(#fff, #fdfbd8)', on: true, fs: 13 },
  { t: 'Alkuperäinen Tase vastattavaa', end: 840, bg: 'linear-gradient(#ffff30, #ffff00)' },
  { t: 'Oikaisut', end: 901, bg: 'linear-gradient(#fffdf0, #fff6d6)', fs: 11.7 },
  { t: 'Oikaistu tuloslaskelma', end: 1058, bg: 'linear-gradient(#45c884, #22ab5f)', fs: 11.3, pr: 6 },
  { t: 'Oikaistu tase vastaavaa', end: 1218, bg: 'linear-gradient(#45c884, #22ab5f)', fs: 11.3, pr: 6 },
  { t: 'Oikaistu tase vastattavaa', end: 1390, bg: 'linear-gradient(#45c884, #22ab5f)', fs: 11.3, pr: 6 },
  { t: 'Tunnusluvut', end: 1479, bg: 'linear-gradient(#9262bb, #7740a6)', c: '#fff', fs: 11.7, pr: 2 },
  { t: 'Trendianalyysi Tuloslaskelma', end: 1609, bg: 'linear-gradient(#d94040, #c21f23)', c: '#fff', clip: true },
];

export default function App() {
  const rowNums = Array.from({ length: 75 }, (_, i) => i + 1);
  return (
    <Win>
      <Global />
      <Chrome>
        <TitleRow>
          <Qat>
            <QatSlot $w={17}><ExcelIcon /></QatSlot>
            <QatSlot $w={11} />
            <QatSlot $w={16}><SaveIcon /></QatSlot>
            <QatSlot $w={6} />
            <QatSlot $w={14}><UndoIcon /></QatSlot>
            <QatSlot $w={12}><Tri $d="d" $s={3} $c="#22303f" /></QatSlot>
            <QatSlot $w={6} />
            <QatSlot $w={14}><UndoIcon grey /></QatSlot>
            <QatSlot $w={12}><Tri $d="d" $s={3} $c="#8a9aa8" /></QatSlot>
            <QatSlot $w={5}><VSep $h={13} /></QatSlot>
            <QatSlot $w={12}><Tri $d="d" $s={3} $c="#22303f" /></QatSlot>
          </Qat>
          <TitleText>{'uusittuAnalyysityokalu1.5  [Yhteensopiva tila]  -  Microsoft Excel Starter'}</TitleText>
          <WinBtns>
            <WinBtn $w={28}><Svg w={10} h={4}><rect x="0.5" y="0.5" width="9" height="3" fill="#fff" stroke="#556" /></Svg></WinBtn>
            <WinBtn $w={24}><Svg w={9} h={10}><rect x="1.5" y="0.5" width="6" height="9" fill="#fff" stroke="#556" /></Svg></WinBtn>
            <WinBtn $w={46} $close><Glyph $s={11} $b $c="#fff">X</Glyph></WinBtn>
          </WinBtns>
        </TitleRow>
        <TabsRow>
          <FileTab>Tiedosto</FileTab>
          <MenuTab $w={60} $ml={5} $on>Aloitus</MenuTab>
          <MenuTab $w={40} $ml={8}>Lisää</MenuTab>
          <MenuTab $w={76} $ml={22}>Sivun asettelu</MenuTab>
          <MenuTab $w={36} $ml={24}>Kaavat</MenuTab>
          <RightIcons>
            <Svg w={10} h={8}><path d="M1 7l4-5 4 5H6.5L5 5 3.5 7z" fill="none" stroke="#3c4a5e" /></Svg>
            <Spacer $w={6} />
            <HelpIcon />
            <Spacer $w={8} />
            <Svg w={11} h={6}><rect x="0.5" y="0.5" width="10" height="4" rx="1" fill="#fff" stroke="#3c4a5e" /></Svg>
            <Spacer $w={10} />
            <Svg w={12} h={12}><rect x="3.5" y="0.5" width="8" height="8" fill="#fff" stroke="#3c4a5e" /><rect x="0.5" y="3.5" width="8" height="8" fill="#fff" stroke="#3c4a5e" /></Svg>
            <Spacer $w={11} />
            <Glyph $s={13} $b $c="#3c4a5e">X</Glyph>
            <Spacer $w={2} />
          </RightIcons>
        </TabsRow>
      </Chrome>

      <Ribbon>
        <Group $w={157}>
          <GroupBody>
            <Large $w={30} $ml={8}>
              <LargeIcon><PasteIcon /></LargeIcon>
              <LargeText>Liitä</LargeText>
              <CaretRow><Caret /></CaretRow>
            </Large>
            <SmallList $ml={12}>
              <SmallItem><SmallIcon><CutIcon /></SmallIcon>Leikkaa</SmallItem>
              <SmallItem><SmallIcon><CopyIcon /></SmallIcon>Kopioi <Caret /></SmallItem>
              <SmallItem><SmallIcon><BrushIcon /></SmallIcon>Muotoilusivellin</SmallItem>
            </SmallList>
          </GroupBody>
          <GroupFoot><GroupLabel>Leikepöytä</GroupLabel><Launcher /></GroupFoot>
        </Group>

        <Group $w={209}>
          <GroupBody $pl={6} $col>
            <ToolRow $mt={10}>
              <Combo $w={112}>Calibri <Caret /></Combo>
              <Combo $w={44}>11 <Caret /></Combo>
              <GrowTool $w={20} $ml={1}><Glyph $s={16} $serif $b>A</Glyph><Tri $d="u" $s={2} $c="#2f62b5" /></GrowTool>
              <GrowTool $w={20} $ml={1}><Glyph $s={13} $serif $b>A</Glyph><Tri $d="d" $s={2} $c="#2f62b5" /></GrowTool>
            </ToolRow>
            <ToolRow $mt={7}>
              <Tool $w={24}><Glyph $b $serif $s={13}>B</Glyph></Tool>
              <Tool $w={20}><Glyph $i $b $serif $s={13}>I</Glyph></Tool>
              <Tool $w={28}><Glyph $u $b $serif $s={13}>U</Glyph></Tool>
              <Caret />
              <VSep $ml={8} />
              <Tool $w={42}><BorderIcon /><Caret /></Tool>
              <VSep />
              <Tool $w={42} $ml={1}><FillIcon /><Caret /></Tool>
              <Tool $w={30} $ml={-1}><FontColor /><Caret /></Tool>
            </ToolRow>
          </GroupBody>
          <GroupFoot><GroupLabel>Fontti</GroupLabel><Launcher /></GroupFoot>
        </Group>

        <Group $w={265}>
          <GroupBody $pl={6}>
            <Column $w={69}>
              <ToolRow>
                <Tool $w={23}><Bars items={[[0, 1, 14], [2, 3, 10], [0, 5, 14]]} /></Tool>
                <Tool $w={23}><Bars items={[[0, 4, 14], [2, 6, 10], [0, 8, 14]]} /></Tool>
                <Tool $w={23} $on><Bars items={[[0, 6, 14], [2, 8, 10], [0, 10, 14]]} /></Tool>
              </ToolRow>
              <ToolRow $mt={7}>
                <Tool $w={23}><Bars items={[[0, 1, 14], [0, 3.5, 9], [0, 6, 14], [0, 8.5, 9], [0, 11, 14]]} /></Tool>
                <Tool $w={23}><Bars items={[[0, 1, 14], [3, 3.5, 8], [0, 6, 14], [3, 8.5, 8], [0, 11, 14]]} /></Tool>
                <Tool $w={23}><Bars items={[[0, 1, 14], [5, 3.5, 9], [0, 6, 14], [5, 8.5, 9], [0, 11, 14]]} /></Tool>
              </ToolRow>
            </Column>
            <Column $w={53} $ml={3}>
              <ToolRow>
                <VSep />
                <Tool $w={34} $ml={6}><OrientIcon /><Caret /></Tool>
              </ToolRow>
              <ToolRow $mt={7}>
                <VSep />
                <Tool $w={22} $ml={6}><IndentIcon /></Tool>
                <Tool $w={22}><IndentIcon rev /></Tool>
              </ToolRow>
            </Column>
            <VSep $h={55} $mt={7} />
            <Column $ml={8}>
              <ToolRow><WrapIcon /><SmallLabelBase>Rivitä teksti</SmallLabelBase></ToolRow>
              <ToolRow $mt={7}><MergeIcon /><SmallLabelBase>Yhdistä ja keskitä</SmallLabelBase><Spacer $w={5} /><Caret /></ToolRow>
            </Column>
          </GroupBody>
          <GroupFoot><GroupLabel>Tasaus</GroupLabel><Launcher /></GroupFoot>
        </Group>

        <Group $w={143}>
          <GroupBody $pl={6} $col>
            <ToolRow $mt={10}><Combo $w={133}>Yleinen <Caret /></Combo></ToolRow>
            <ToolRow $mt={7}>
              <Tool $w={32}><CurrencyIcon /><Caret /></Tool>
              <Tool $w={22} $ml={3}><Glyph $s={13}>%</Glyph></Tool>
              <Tool $w={24}><Glyph $s={12}>000</Glyph></Tool>
              <VSep $ml={2} />
              <Tool $w={21} $ml={3}><DecWrap><Sub>←,0</Sub><Sub>,00</Sub></DecWrap></Tool>
              <Tool $w={22}><DecWrap><Sub>,00</Sub><Sub>→,0</Sub></DecWrap></Tool>
            </ToolRow>
          </GroupBody>
          <GroupFoot><GroupLabel>Numero</GroupLabel><Launcher /></GroupFoot>
        </Group>

        <Group $w={582}>
          <GroupBody $pl={8}>
            <Large $w={60}>
              <LargeIcon><CFIcon /></LargeIcon>
              <LargeText>Ehdollinen</LargeText>
              <LargeText>muotoilu <Caret /></LargeText>
            </Large>
            <Large $w={63}>
              <LargeIcon><TableIcon /></LargeIcon>
              <LargeText>Muotoile</LargeText>
              <LargeText>taulukoksi <Caret /></LargeText>
            </Large>
            <Gallery>
              <StyleOn>Normaali</StyleOn>
              <Style $bg="#ffc7ce" $c="#9c0006">Huono</Style>
              <Style $bg="#c6efce" $c="#006100">Hyvä</Style>
              <Style $bg="#ffeb9c" $c="#9c6500">Neutraali</Style>
              <Style $c="#800080" $u>Avattu hype...</Style>
              <Style $bg="#ffffcc" $bd="#9a9a9a">Huomautus</Style>
              <Style $c="#0000ff" $u>Hyperlinkki</Style>
              <Style $bg="#f2f2f2" $c="#fa7d00" $bd="#7f7f7f" $b>Laskenta</Style>
            </Gallery>
            <GalleryScroll>
              <GalleryBtn><Tri $d="u" $s={3} $c="#a8b6c6" /></GalleryBtn>
              <GalleryBtn><Tri $d="d" $s={3} /></GalleryBtn>
              <GalleryBtn><Tri $d="d" $s={3} /></GalleryBtn>
            </GalleryScroll>
          </GroupBody>
          <GroupFoot><GroupLabel>Tyyli</GroupLabel></GroupFoot>
        </Group>

        <Group $w={145}>
          <GroupBody $pl={5}>
            <Large $w={42}><LargeIcon><InsertIcon /></LargeIcon><LargeText>Lisää</LargeText><CaretRow><Caret /></CaretRow></Large>
            <Large $w={42}><LargeIcon><DeleteIcon /></LargeIcon><LargeText>Poista</LargeText><CaretRow><Caret /></CaretRow></Large>
            <Large $w={52}><LargeIcon><FormatIcon /></LargeIcon><LargeText>Muotoile</LargeText><CaretRow><Caret /></CaretRow></Large>
          </GroupBody>
          <GroupFoot><GroupLabel>Solut</GroupLabel></GroupFoot>
        </Group>

        <Group $w={264}>
          <GroupBody $pl={10}>
            <SmallList $w={148}>
              <SmallItem><SmallIcon><SigmaGlyph /></SmallIcon>Automaattinen summa <Caret /></SmallItem>
              <SmallItem><SmallIcon><FillDown /></SmallIcon>Täyttö <Caret /></SmallItem>
              <SmallItem><SmallIcon><Eraser /></SmallIcon>Poista <Caret /></SmallItem>
            </SmallList>
            <Large $w={58}><LargeIcon><SortIcon /></LargeIcon><LargeText>Lajittele ja</LargeText><LargeText>suodata <Caret /></LargeText></Large>
            <Large $w={40}><LargeIcon><BinoIcon /></LargeIcon><LargeText>Etsi ja</LargeText><LargeText>valitse <Caret /></LargeText></Large>
          </GroupBody>
          <GroupFoot><GroupLabel>Muokkaaminen</GroupLabel></GroupFoot>
        </Group>

        <Group $w={90}>
          <GroupBody>
            <Large $w={89}><LargeIcon><AbcIcon /></LargeIcon><LargeText>Oikeinkirjoitus</LargeText><CaretRow><Caret /></CaretRow></Large>
          </GroupBody>
          <GroupFoot $tight><GroupLabel>Tekstintarkistus</GroupLabel></GroupFoot>
        </Group>

        <Group $w={50}>
          <GroupBody>
            <Large $w={49}><LargeIcon><CartIcon /></LargeIcon><LargeText>Osta</LargeText><CaretRow><Caret /></CaretRow></Large>
          </GroupBody>
          <GroupFoot $tight><GroupLabel>Päivitä</GroupLabel></GroupFoot>
        </Group>
      </Ribbon>

      <FormulaWrap>
        <NameBox>L65<NameCaret /></NameBox>
        <FxBox><Fx>fx</Fx></FxBox>
        <FormulaInput />
        <FormulaDrop><Tri $d="d" $s={3} /></FormulaDrop>
      </FormulaWrap>

      <Body>
        <Left>
          <SheetRow>
            <Sheet>
              <HeadRow>
                <Corner />
                {NAMES.map(n => <ColHead key={n} $sel={n === 'L'}>{n}</ColHead>)}
              </HeadRow>
              {rowNums.map(n => <SheetRowView key={n} n={n} />)}
              <Note>
                <div>
                  Tarkista taseen vastaavaa-puolen kirjauksien jälkeen, että<br />
                  Vastaavaa yhteensä- ja muut välierät täsmäävät<br />
                  alkuperäiseen lähteeseen.
                </div>
              </Note>
            </Sheet>
            <VScroll>
              <Split />
              <ScrollArrow $h={15}><Tri $d="u" $s={4} /></ScrollArrow>
              <Thumb><Grip /></Thumb>
              <ScrollArrow $h={24}><Tri $d="d" $s={4} /></ScrollArrow>
            </VScroll>
          </SheetRow>
          <TabBar>
            <TabNav>
              <Tri $d="l" $s={4} $c="#5d7392" />
              <Tri $d="l" $s={4} $c="#5d7392" />
              <Tri $d="r" $s={4} $c="#5d7392" />
              <Tri $d="r" $s={4} $c="#5d7392" />
            </TabNav>
            <TabList>
              {TABS.map((t, i) => {
                const start = i === 0 ? 62 : TABS[i - 1].end - 8;
                return (
                  <Tab key={t.t} $w={t.end - start} $bg={t.bg} $c={t.c} $on={t.on} $first={i === 0} $z={t.on ? 20 : i + 1} $fs={t.fs || 12} $pr={t.pr || 0}>
                    {t.clip ? <TabClipStart>{t.t}</TabClipStart> : t.t}
                  </Tab>
                );
              })}
            </TabList>
            <HScroll>
              <Tri $d="l" $s={4} />
              <HThumb>|||</HThumb>
              <Tri $d="r" $s={4} />
              <Splitter />
            </HScroll>
          </TabBar>
        </Left>
        <Panel>
          <PanelHead $mt={7}><HeadIcon><Spark /></HeadIcon>Käytön aloittaminen</PanelHead>
          <PanelLink $mt={5}>Aloitusopas</PanelLink>
          <PanelLink $mt={6}>Ohje ja tuki</PanelLink>
          <PanelHead $mt={15}><HeadIcon><PlusGold /></HeadIcon>Jatka</PanelHead>
          <PanelLink $mt={5}>Hae ilmaisia malleja</PanelLink>
          <PanelLink $mt={6}>Lataa ClipArt-kuvia</PanelLink>
          <PanelHead $mt={15}><HeadIcon><CartPlus /></HeadIcon>Lisää</PanelHead>
          <PanelLink $mt={5}>Hanki Microsoft PowerPoint tai</PanelLink>
          <PanelLink $mt={0}>Microsoft Outlook</PanelLink>
          <AdLabel>Mainos</AdLabel>
          <Ad>
            <AdMs>Microsoft</AdMs>
            <AdMain>
              <OfficeLogo />
              <AdText>
                <AdTitle>Office 365</AdTitle>
                <AdSub>Home Premium</AdSub>
              </AdText>
            </AdMain>
            <AdBtn>Buy it Today <ArrowCircle /></AdBtn>
          </Ad>
        </Panel>
      </Body>

      <Status>
        <StatusText>Valmis</StatusText>
        <ViewBtn $on $ml={1631}><Svg w={12} h={12}><rect x="0.5" y="0.5" width="11" height="11" fill="#fff" stroke="#5f6f84" /><path d="M4.5 1v10M8 1v10M1 4.5h10M1 8h10" stroke="#5f6f84" /></Svg></ViewBtn>
        <ViewBtn $ml={3}><Svg w={11} h={13}><rect x="0.5" y="0.5" width="10" height="12" fill="#c6d3e4" stroke="#5f6f84" /><rect x="2.5" y="2.5" width="6" height="8" fill="#fff" stroke="#7c8b9e" /></Svg></ViewBtn>
        <ViewBtn $ml={2}><Svg w={12} h={13}><path d="M1.5 1v11M6 1v11M10.5 1v11" stroke="#5f6f84" strokeWidth="2" /><path d="M0 8h12" stroke="#5f6f84" strokeDasharray="2 1" /></Svg></ViewBtn>
        <ZoomPct>55%</ZoomPct>
        <ZoomRound $ml={11}>−</ZoomRound>
        <ZoomTrack><ZoomTick /><ZoomThumb /></ZoomTrack>
        <ZoomRound>+</ZoomRound>
      </Status>
      <BottomEdge />
    </Win>
  );
}
